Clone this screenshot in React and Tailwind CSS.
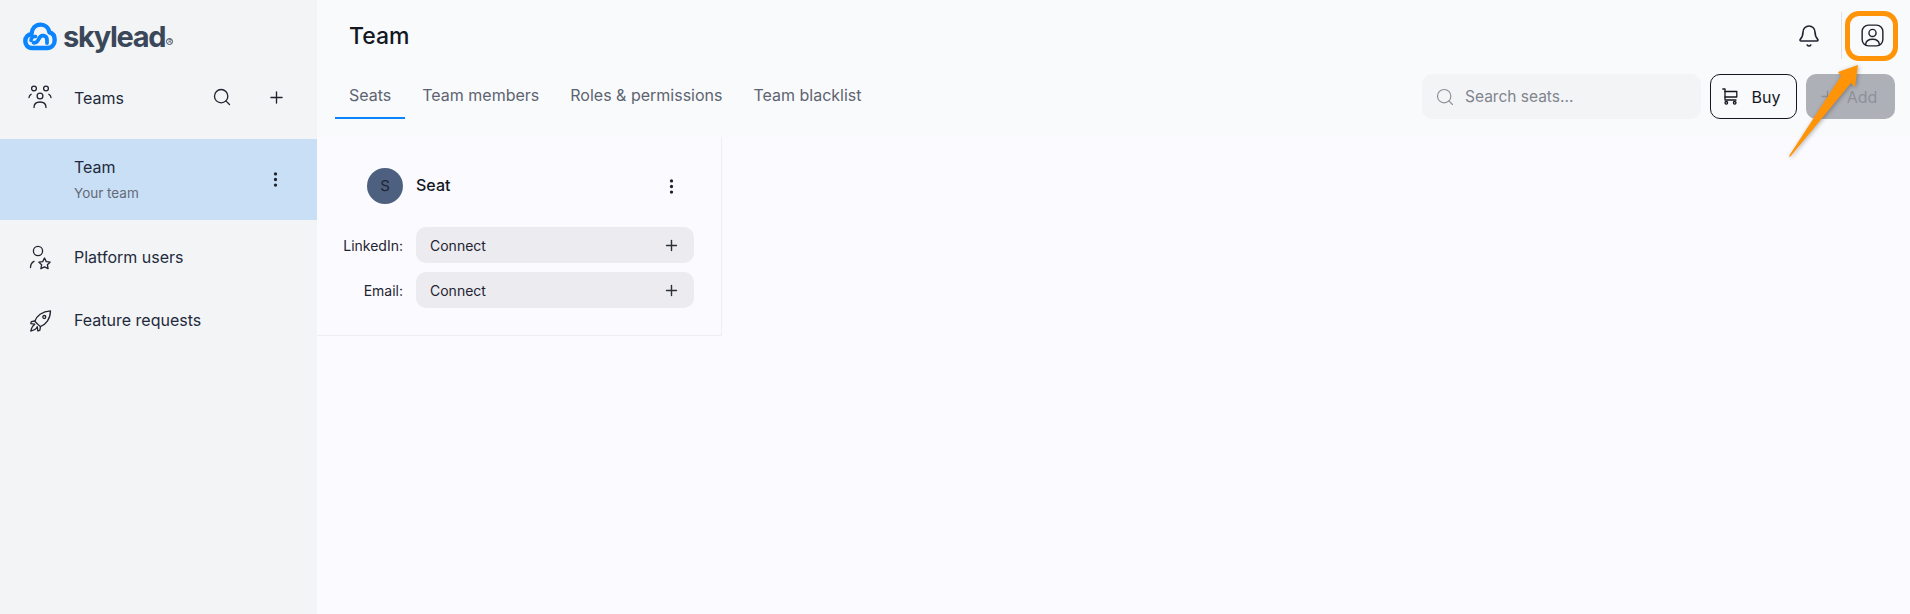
import React from "react";
import { Search, Plus, EllipsisVertical, Bell } from "lucide-react";

const Cloud = () => (
  <svg width="34" height="29" viewBox="0 0 34 29" fill="none">
    <path d="M9 26 C4.5 26 2.3 22.5 2.3 19 C2.3 15.3 5 12.6 8.4 12.3 C8.8 6.5 12.5 2.6 17.5 2.6 C22.2 2.6 25.8 6 26.5 10.4 C29.7 11.2 31.7 14 31.7 18 C31.7 22.5 28.6 26 24 26 Z" stroke="#0a84ff" strokeWidth="4.4" strokeLinejoin="round" />
    <path d="M10.5 20.7 C13 21.2 14.5 19.5 15.5 17.5 C16.5 15.2 18 13.2 20.5 13.7 C23 14.2 24 16 24 18 L24 21" stroke="#0a84ff" strokeWidth="3.8" strokeLinecap="round" />
    <path d="M8 18.5 C8 15.8 10 14.2 12.5 14.5" stroke="#0a84ff" strokeWidth="3.6" strokeLinecap="round" />
  </svg>
);

const TeamsIcon = () => (
  <svg width="26" height="26" viewBox="0 0 26 26" fill="none" stroke="#1f2430" strokeWidth="1.3" strokeLinecap="round">
    <circle cx="7" cy="4.5" r="2.4" />
    <circle cx="19" cy="4.5" r="2.4" />
    <circle cx="13" cy="12" r="2.9" />
    <path d="M2 13.5 C2.2 11.8 3 11 4.2 10.3" />
    <path d="M24 13.5 C23.8 11.8 23 11 21.8 10.3" />
    <path d="M7 23.5 C7 20 9.5 18 13 18 C16.5 18 19 20 19 23.5" />
  </svg>
);

const PlatformIcon = () => (
  <svg width="26" height="26" viewBox="0 0 26 26" fill="none" stroke="#1f2430" strokeWidth="1.3" strokeLinecap="round" strokeLinejoin="round">
    <circle cx="11" cy="6" r="4.6" />
    <path d="M3.5 22.5 C3.5 19.5 4.5 17.5 7 16.3" />
    <path d="M17.5 13 L19.3 16.6 L23.2 17.1 L20.4 19.8 L21.1 23.7 L17.5 21.9 L13.9 23.7 L14.6 19.8 L11.8 17.1 L15.7 16.6 Z" />
  </svg>
);

const RocketIcon = () => (
  <svg width="24" height="24" viewBox="0 0 24 24" fill="none" stroke="#1f2430" strokeWidth="1.3" strokeLinecap="round" strokeLinejoin="round">
    <path d="M8 14.5 L5.8 12.3 C7.5 7 13 2.3 21.5 1.8 C21.3 10.2 16.8 15.8 11.3 17.6 Z" />
    <circle cx="15.3" cy="8" r="1.5" />
    <path d="M6 12 L2.3 12.7 L1.8 14.7 L5.5 15.2" />
    <path d="M11.5 17.6 L10.8 21.3 L8.8 21.8 L8.3 18" />
    <path d="M5.7 15.5 C3.8 16.6 2.4 19.4 1.8 22 C4.4 21.4 7.2 20 8.2 18" />
  </svg>
);

const UserBox = () => (
  <svg width="23" height="23" viewBox="0 0 24 24" fill="none" stroke="#1f2430" strokeWidth="1.5" strokeLinecap="round">
    <rect x="1.2" y="1.2" width="21.6" height="21.6" rx="6.5" />
    <circle cx="12" cy="9.3" r="3.7" />
    <path d="M4.8 21.5 C5.2 17.8 8 16 12 16 C16 16 18.8 17.8 19.2 21.5" />
  </svg>
);

const CartIcon = () => (
  <svg width="16" height="17" viewBox="0 0 16 17" fill="none" stroke="#14171f" strokeWidth="1.3" strokeLinecap="round" strokeLinejoin="round">
    <path d="M0.8 1 H3 V12 H14" />
    <path d="M3 3.5 H14.8 V9 H3" />
    <circle cx="4.3" cy="14.8" r="1.3" />
    <circle cx="12.7" cy="14.8" r="1.3" />
  </svg>
);

const Tab = ({ children, active }) => (
  <div className={"h-full px-[14px] pt-[9px] text-[16px] text-[#5d6470] border-b-2 " + (active ? "border-[#0a84ff]" : "border-transparent")}>
    {children}
  </div>
);

const ConnectRow = ({ label }) => (
  <div className="flex items-center">
    <div className="w-[81px] text-right text-[14px] text-[#1f2430]">{label}</div>
    <div className="ml-[13px] flex h-9 w-[278px] items-center justify-between rounded-[10px] bg-[#ecebf0] pl-[14px] pr-[14px] text-[14px] text-[#1f2430]">
      Connect
      <Plus size={17} strokeWidth={2} color="#2b2f38" />
    </div>
  </div>
);

const NavItem = ({ icon, label, className }) => (
  <div className={"flex items-center " + className}>
    <div className="flex w-[74px] justify-end pr-[21px]">{icon}</div>
    <span className="relative -top-px text-[16px] text-[#1f2a3c]">{label}</span>
  </div>
);

export default function App() {
  return (
    <div className="relative flex h-[614px] w-[1910px] overflow-hidden bg-[#fbfbff] font-['Inter',sans-serif]">
      <aside className="flex w-[317px] shrink-0 flex-col bg-[#f2f4f6]">
        <div className="flex h-[72px] items-center pl-[23px]">
          <Cloud />
          <span className="ml-[6px] text-[29px] font-bold leading-none tracking-[-1.3px] text-[#3a4759]">skylead</span>
          <span className="ml-[1px] mt-[11px] flex h-[7px] w-[7px] items-center justify-center rounded-full border border-[#3a4759] text-[5px] leading-none text-[#3a4759]">R</span>
        </div>
        <div className="flex h-[50px] items-center">
          <div className="flex w-[74px] justify-end pr-[21px]"><TeamsIcon /></div>
          <span className="relative top-px text-[16px] text-[#1f2a3c]">Teams</span>
          <Search size={20} strokeWidth={1.6} color="#1f2430" className="ml-[88px]" />
          <Plus size={19} strokeWidth={1.7} color="#1f2430" className="ml-[35px]" />
        </div>
        <div className="mt-[17px] flex h-[81px] items-center justify-between bg-[#c9dff6] pl-[74px] pr-[32px]">
          <div className="relative -top-px">
            <div className="text-[16px] leading-[22px] text-[#1f2a3c]">Team</div>
            <div className="mt-[6px] text-[13.5px] leading-[18px] text-[#646a76]">Your team</div>
          </div>
          <EllipsisVertical size={19} strokeWidth={2.2} color="#1f2430" />
        </div>
        <NavItem icon={<PlatformIcon />} label="Platform users" className="mt-[18px] h-[40px]" />
        <NavItem icon={<RocketIcon />} label="Feature requests" className="mt-[23px] h-[40px]" />
      </aside>

      <main className="flex min-w-0 flex-1 flex-col">
        <header className="h-[137px] shrink-0 bg-[#f9fafc]">
          <div className="flex h-[74px] items-start justify-between pr-[15px]">
            <h1 className="mt-[21px] pl-[32px] text-[23px] font-medium leading-[30px] text-[#14171f]">Team</h1>
            <div className="mt-[12px] flex h-[47px] items-center">
              <Bell size={24} strokeWidth={1.6} color="#1f2430" className="mr-[20px]" />
              <div className="h-[47px] w-px bg-[#dfe1e5]" />
              <div className="ml-[19px] mr-[11px]"><UserBox /></div>
            </div>
          </div>
          <div className="flex h-[45px] items-start justify-between pl-[18px] pr-[15px]">
            <div className="flex h-full gap-[3px]">
              <Tab active>Seats</Tab>
              <Tab>Team members</Tab>
              <Tab>Roles &amp; permissions</Tab>
              <Tab>Team blacklist</Tab>
            </div>
            <div className="flex h-full gap-[9px]">
              <div className="flex w-[279px] items-center rounded-[10px] bg-[#f3f4f6] pl-[13px]">
                <Search size={20} strokeWidth={1.4} color="#8a8f98" />
                <span className="ml-[10px] text-[15.5px] text-[#80858e]">Search seats...</span>
              </div>
              <div className="flex w-[87px] items-center justify-center gap-[14px] rounded-[10px] border border-[#14171f] pr-[5px] text-[16px] text-[#14171f]">
                <CartIcon />
                Buy
              </div>
              <div className="flex w-[89px] items-center justify-center gap-[10px] rounded-[10px] bg-[#adb0b7] pr-[6px] text-[16px] text-[#8e9199]">
                <Plus size={19} strokeWidth={1.6} color="#8e9199" />
                Add
              </div>
            </div>
          </div>
        </header>
        <div className="flex w-[405px] flex-col border-b border-r border-[#eceef2] pb-[27px] pl-[5px]">
          <div className="mb-[23px] mt-[31px] flex items-center pl-[45px] pr-[40px]">
            <div className="flex h-9 w-9 items-center justify-center rounded-full bg-[#4e6080] text-[15px] text-[#1f2430]">S</div>
            <span className="relative -top-px ml-[13px] flex-1 text-[16px] font-medium text-[#14171f]">Seat</span>
            <EllipsisVertical size={19} strokeWidth={2.2} color="#1f2430" />
          </div>
          <div className="flex flex-col gap-[9px]">
            <ConnectRow label="LinkedIn:" />
            <ConnectRow label="Email:" />
          </div>
        </div>
      </main>

      <div className="absolute left-[1845px] top-[11px] h-[50px] w-[53px] rounded-[14px] border-[5px] border-[#ff9408]" />
      <svg className="absolute left-[1780px] top-[55px] drop-shadow-[1px_1px_2px_rgba(0,0,0,0.3)]" width="100" height="110" viewBox="0 0 100 110">
        <path d="M78 10 L75 32 L71 28 L10 102 L9 101 L61 21 L58 17 Z" fill="#ff9408" />
      </svg>
    </div>
  );
}
